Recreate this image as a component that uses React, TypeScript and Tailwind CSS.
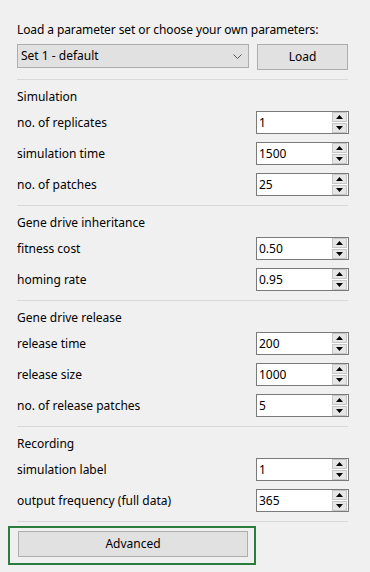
import React from 'react';

type Field = { label: string; value: string };
type Section = { title: string; fields: Field[] };

const sections: Section[] = [
  {
    title: 'Simulation',
    fields: [
      { label: 'no. of replicates', value: '1' },
      { label: 'simulation time', value: '1500' },
      { label: 'no. of patches', value: '25' },
    ],
  },
  {
    title: 'Gene drive inheritance',
    fields: [
      { label: 'fitness cost', value: '0.50' },
      { label: 'homing rate', value: '0.95' },
    ],
  },
  {
    title: 'Gene drive release',
    fields: [
      { label: 'release time', value: '200' },
      { label: 'release size', value: '1000' },
      { label: 'no. of release patches', value: '5' },
    ],
  },
  {
    title: 'Recording',
    fields: [
      { label: 'simulation label', value: '1' },
      { label: 'output frequency (full data)', value: '365' },
    ],
  },
];

function Arrow({ up }: { up?: boolean }) {
  return (
    <svg width="7" height="4" viewBox="0 0 7 4">
      {up ? <polygon points="0,4 7,4 3.5,0" fill="#000" /> : <polygon points="0,0 7,0 3.5,4" fill="#000" />}
    </svg>
  );
}

function SpinBox({ value }: { value: string }) {
  return (
    <div className="flex h-[23px] w-[93px] border border-[#7a7a7a] bg-white">
      <div className="flex flex-1 items-center pl-[2px] text-[12px] leading-none text-black">{value}</div>
      <div className="mr-px flex w-[15px] flex-col gap-px">
        <div className="flex h-[10px] items-center justify-center border border-[#c6c6c6] bg-[#e6e6e6]">
          <Arrow up />
        </div>
        <div className="flex h-[10px] items-center justify-center border border-[#c6c6c6] bg-[#e6e6e6]">
          <Arrow />
        </div>
      </div>
    </div>
  );
}

function Separator() {
  return <div className="mt-[9px] h-px w-[331px] bg-[#d9d9d9]" />;
}

export default function App() {
  return (
    <div
      className="h-[572px] w-[370px] overflow-hidden bg-[#f0f0f0] text-[12px] text-black"
      style={{ fontFamily: '"Noto Sans", "Open Sans", sans-serif' }}
    >
      <div className="pl-[17px] pr-[21px] pt-[21px]">
        <div className="h-[18px] leading-[18px] tracking-[-0.1px]">
          Load a parameter set or choose your own parameters:
        </div>

        <div className="mt-[5px] flex items-start gap-[8px]">
          <div className="flex h-[24px] w-[232px] items-center justify-between border border-[#adadad] bg-[#e1e1e1] pl-[3px] pr-[6px]">
            <span>Set 1 - default</span>
            <svg width="9" height="5" viewBox="0 0 9 5">
              <polyline points="0.5,0.5 4.5,4.5 8.5,0.5" fill="none" stroke="#555" strokeWidth="1" />
            </svg>
          </div>
          <div className="flex h-[26px] w-[91px] items-center justify-center border border-[#adadad] bg-[#e1e1e1]">
            Load
          </div>
        </div>

        {sections.map((section) => (
          <div key={section.title}>
            <Separator />
            <div className="mt-[8px] h-[18px] leading-[18px]">{section.title}</div>
            <div className="mt-[5px] flex flex-col gap-[8px]">
              {section.fields.map((f) => (
                <div key={f.label} className="flex h-[23px] items-center justify-between">
                  <span>{f.label}</span>
                  <SpinBox value={f.value} />
                </div>
              ))}
            </div>
          </div>
        ))}

        <Separator />
      </div>

      {/* Advanced, focused frame */}
      <div className="ml-[8px] mt-[4px] h-[39px] w-[248px] border-2 border-[#2a7d3c] pl-[8px] pt-[3px]">
        <div className="flex h-[26px] w-[230px] items-center justify-center border border-[#adadad] bg-[#e1e1e1]">
          Advanced
        </div>
      </div>
    </div>
  );
}
